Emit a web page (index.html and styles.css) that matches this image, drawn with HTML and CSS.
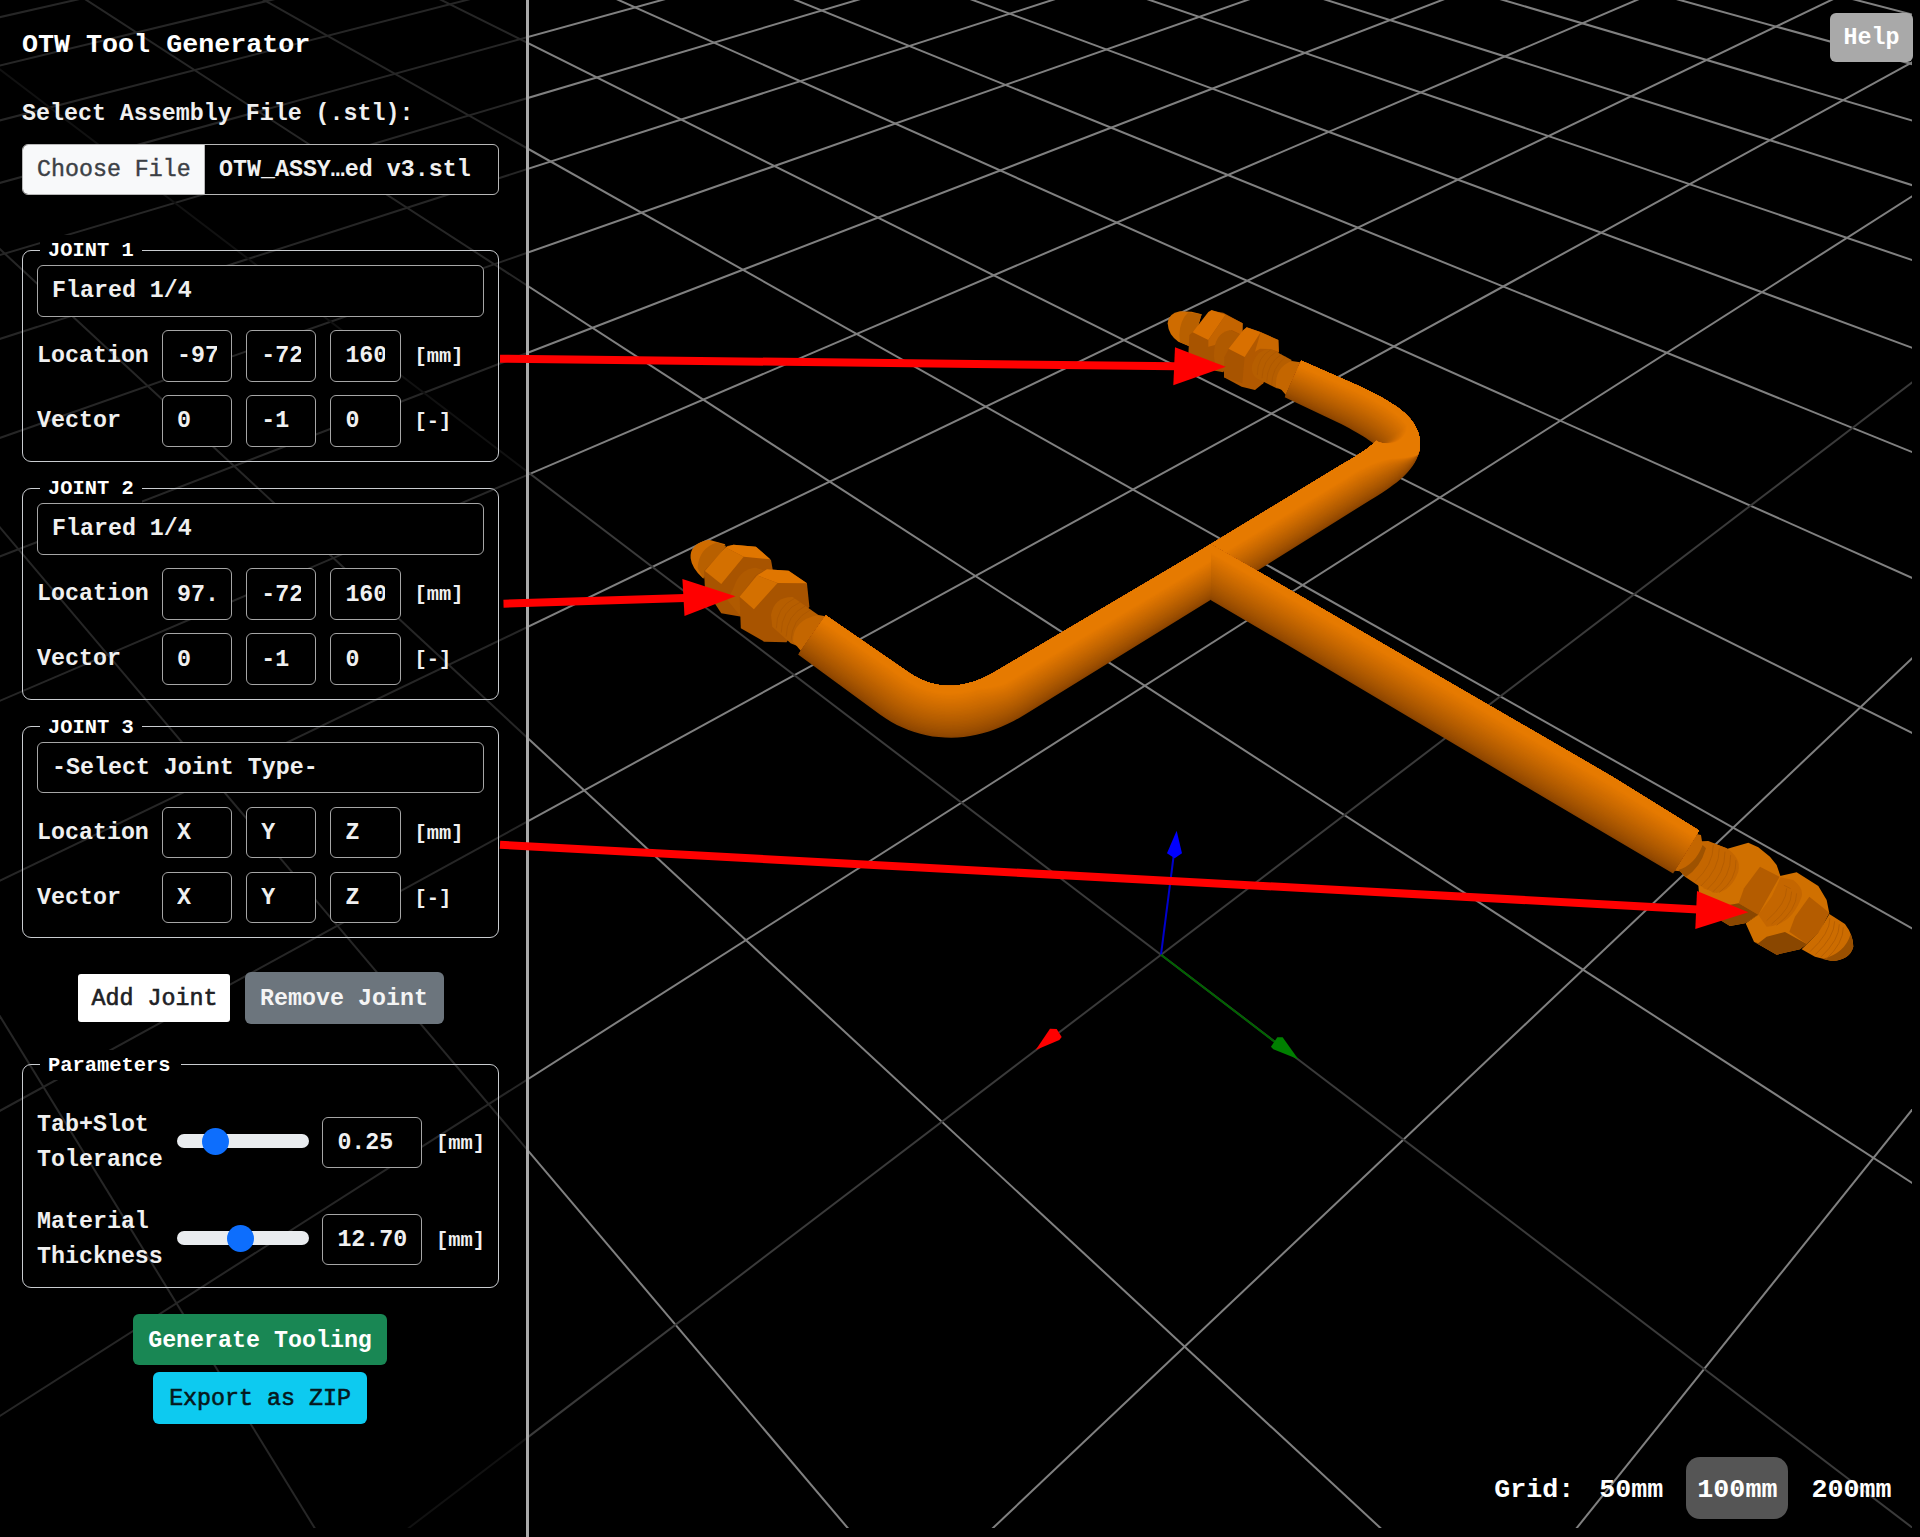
FILE: index.html
```html
<!DOCTYPE html>
<html lang="en">
<head>
<meta charset="utf-8">
<title>OTW Tool Generator</title>
<link rel="stylesheet" href="styles.css">
</head>
<body>
<svg class="scene" viewBox="0 0 1912 1528" aria-hidden="true">
  <defs>
    <clipPath id="branch-clip"><rect x="1211" y="500" width="700" height="500"/></clipPath>
  </defs>
  <g id="grid" class="grid"></g>
  <g class="axes">
    <path d="M1161 954.7 1173.5 857" stroke="#0000cc"/>
    <path d="M1161 954.7 1275 1042" stroke="#006400"/>
    <g transform="translate(1000 800) scale(.3333)" stroke="none">
      <path d="M530 92 546 160 524 175 501 160Z" fill="#00f"/>
      <path d="M895 778 848 712 832 712 813 740 820 748Z" fill="#008000"/>
      <path d="M107 750 150 686 170 687 185 711 178 720Z" fill="#f00"/>
    </g>
  </g>

  <!-- fitting, joint 1 -->
  <g transform="translate(1100 280) scale(.3333)">
    <path fill="#cf6c00" d="M203 130Q205 100 240 94L275 95 305 103 275 202 235 185Q205 165 203 130Z"/>
    <path fill="#b86000" d="M238 165Q240 120 265 97L305 103 275 202 240 186Z"/>
    <path fill="#a85400" d="M335 92 370 98 428 130 428 165 370 277 345 272 265 225 268 165 280 155Z"/>
    <path fill="#d97000" d="M325 96 335 90 377 104 325 180 278 157Z"/>
    <path fill="#c46400" d="M377 104 428 130 426 165 395 150 345 195 325 200 325 180Z"/>
    <path fill="#b05a00" d="M342 230Q340 160 390 150L425 165 385 262 345 250Z"/>
    <path fill="#b25900" d="M440 142 480 155 535 180 537 215 490 310 465 330 425 320 372 292 373 232 385 205Z"/>
    <path fill="#a85400" d="M373 232 386 207 434 230 427 310 372 292Z"/>
    <path fill="#d97000" d="M430 150 440 142 482 157 434 231 386 206Z"/>
    <path fill="#c96800" d="M482 157 535 180 536 215 510 207 480 206 465 215Z"/>
    <path fill="#b65e00" d="M455 260Q470 205 515 208L575 240 545 327 530 325 470 295Q455 285 455 260Z"/>
    <g fill="none" stroke="#aa5600" stroke-width="2">
      <path d="M472 285Q472 230 512 210M486 295Q488 240 528 216M500 305Q502 250 544 223M515 315Q516 262 557 231"/>
    </g>
    <path fill="#c46600" d="M528 320Q525 262 575 243L610 248 562 350 545 330Z"/>
  </g>

  <!-- fitting, joint 2 -->
  <g transform="translate(660 500) scale(.4082 .3333)">
    <path fill="#cf6c00" d="M75 175Q72 130 120 119L160 133 110 217 105 235Q78 205 75 175Z"/>
    <path fill="#b86000" d="M92 205Q95 145 140 127L162 138 112 222 108 238Z"/>
    <path fill="#a85400" d="M165 138 180 134 235 140 272 180 277 215 200 350 150 340 110 265 108 213Z"/>
    <path fill="#e07600" d="M160 142 180 134 235 140 270 178 205 170Z"/>
    <path fill="#d47000" d="M160 142 205 170 150 252 110 213Z"/>
    <path fill="#b05a00" d="M180 265Q195 205 235 203L262 215 195 345 165 300Z"/>
    <path fill="#a85400" d="M262 208 315 212 360 250 366 320 310 427 255 425 198 385 195 290 235 225Z"/>
    <path fill="#e07600" d="M238 226 262 208 315 212 360 250 288 249Z"/>
    <path fill="#d47000" d="M238 226 288 249 230 328 195 290Z"/>
    <path fill="#b65e00" d="M272 345Q280 290 325 291L388 345 335 437 320 430 275 380Z"/>
    <g fill="none" stroke="#aa5600" stroke-width="2">
      <path d="M285 385Q285 320 330 295M297 398Q297 330 343 307M309 410Q310 345 356 318M321 422Q323 357 368 330"/>
    </g>
    <path fill="#c46600" d="M326 425Q325 360 388 345L412 350 350 460Z"/>
  </g>

  <!-- fitting, joint 3 -->
  <g transform="translate(1600 780) scale(.3333)">
    <path fill="#c46600" d="M205 270 280 160 303 165 306 184 325 183 380 205 425 260 350 342 300 320 255 290 240 274Z"/>
    <path fill="#9e5200" d="M235 270Q285 255 308 195L318 205Q300 265 258 290Z"/>
    <path fill="#d07000" d="M380 207 445 188 475 202 510 230 530 255 542 290 475 405 435 430 390 438 345 410 297 340 295 315 345 338Z"/>
    <path fill="#c46600" d="M340 190 380 205Q425 235 415 275Q395 330 350 339L310 325Z"/>
    <path fill="#b45c00" d="M480 260 542 292 515 350 475 404 416 370 432 325Z"/>
    <path fill="#8a4700" d="M370 378 416 370 475 404 435 430 390 438 330 402Z"/>
    <path fill="#d07000" d="M540 288 590 277 655 318 680 360 688 400 620 492 600 508 530 524 462 485 437 430 475 404Z"/>
    <path fill="#c46600" d="M542 292 580 300Q612 325 605 350Q575 435 500 440L475 404 515 350Z"/>
    <path fill="#b45c00" d="M628 350 688 398 660 455 620 492 568 455 585 410Z"/>
    <path fill="#8a4700" d="M475 490 500 470 555 456 620 492 600 508 530 524 462 485Z"/>
    <path fill="#cc6c00" d="M688 402 735 432Q760 465 760 500Q750 540 695 543L645 530 605 508 655 458Z"/>
    <path fill="#9a5000" d="M752 462Q760 480 760 500Q750 540 695 543L668 537Q735 520 752 462Z"/>
    <g fill="none" stroke="#b25b00" stroke-width="2.5">
      <path d="M340 195Q340 255 285 305M358 205Q358 268 303 318M375 215Q376 280 322 328M392 225Q394 290 338 336M408 240Q410 300 358 337"/>
      <path d="M560 325Q560 370 500 422M575 335Q575 385 515 432M590 340Q590 390 530 436M552 316 572 326"/>
      <path d="M690 415Q690 460 630 515M704 424Q704 470 646 524M718 433Q718 480 662 532M730 442Q730 490 678 538"/>
    </g>
  </g>

  <g id="main-pipe"></g>
  <g id="branch-pipe" clip-path="url(#branch-clip)"></g>
</svg>

<aside class="sidebar">
  <h1 class="title">OTW Tool Generator</h1>
  <label class="file-label">Select Assembly File (.stl):</label>
  <div class="file">
    <span class="file-button">Choose File</span>
    <span class="file-name">OTW_ASSY…ed v3.stl</span>
  </div>

  <fieldset class="group">
    <legend>JOINT 1</legend>
    <div class="field select">Flared 1/4</div>
    <div class="row">
      <span>Location</span>
      <input class="field" value="-97"><input class="field" value="-72"><input class="field" value="160">
      <span class="unit">[mm]</span>
    </div>
    <div class="row">
      <span>Vector</span>
      <input class="field" value="0"><input class="field" value="-1"><input class="field" value="0">
      <span class="unit">[-]</span>
    </div>
  </fieldset>

  <fieldset class="group">
    <legend>JOINT 2</legend>
    <div class="field select">Flared 1/4</div>
    <div class="row">
      <span>Location</span>
      <input class="field" value="97."><input class="field" value="-72"><input class="field" value="160">
      <span class="unit">[mm]</span>
    </div>
    <div class="row">
      <span>Vector</span>
      <input class="field" value="0"><input class="field" value="-1"><input class="field" value="0">
      <span class="unit">[-]</span>
    </div>
  </fieldset>

  <fieldset class="group">
    <legend>JOINT 3</legend>
    <div class="field select">-Select Joint Type-</div>
    <div class="row">
      <span>Location</span>
      <input class="field" value="X"><input class="field" value="Y"><input class="field" value="Z">
      <span class="unit">[mm]</span>
    </div>
    <div class="row">
      <span>Vector</span>
      <input class="field" value="X"><input class="field" value="Y"><input class="field" value="Z">
      <span class="unit">[-]</span>
    </div>
  </fieldset>

  <div class="joint-actions">
    <button class="btn btn-add">Add Joint</button>
    <button class="btn btn-remove">Remove Joint</button>
  </div>

  <fieldset class="group params">
    <legend>Parameters</legend>
    <div class="param">
      <span>Tab+Slot Tolerance</span>
      <div class="slider"><i class="thumb" style="left:25px"></i></div>
      <input class="field" value="0.25">
      <span class="unit">[mm]</span>
    </div>
    <div class="param">
      <span>Material Thickness</span>
      <div class="slider"><i class="thumb" style="left:50px"></i></div>
      <input class="field" value="12.70">
      <span class="unit">[mm]</span>
    </div>
  </fieldset>

  <div class="output-actions">
    <button class="btn btn-generate">Generate Tooling</button>
    <button class="btn btn-export">Export as ZIP</button>
  </div>
</aside>

<button class="help">Help</button>

<nav class="grid-size">
  <span class="grid-title">Grid:</span>
  <span class="size">50mm</span>
  <span class="size active">100mm</span>
  <span class="size">200mm</span>
</nav>

<svg class="callouts" viewBox="0 0 1920 1537" aria-hidden="true">
  <g stroke="#f00" stroke-width="8">
    <path d="M500 358.7 1176 366.2"/>
    <path d="M503.5 603.7 685 598.1"/>
    <path d="M500 844.8 1698 909.4"/>
  </g>
  <g fill="#f00">
    <path d="M1175 347.3 1225.7 366.7 1173.3 385.3Z"/>
    <path d="M682.4 579 735.5 596.3 684.5 616Z"/>
    <path d="M1697 891 1748.3 912.3 1695.3 929Z"/>
  </g>
</svg>
<script src="scene.js"></script>
</body>
</html>
```
FILE: styles.css
```css
* { box-sizing: border-box; }

body {
  margin: 0;
  height: 1537px;
  position: relative;
  overflow: hidden;
  background: #000;
  color: #f0f0f0;
  font: bold 23.3px/35px "Liberation Mono", monospace;
}

.scene {
  position: absolute;
  left: 0;
  top: 0;
  width: 1912px;
  height: 1528px;
  overflow: hidden;
}
.grid { stroke: #808080; stroke-width: 2; }
.grid .axis { stroke: #3a3a3a; }
.axes { stroke-width: 2; }

.callouts {
  position: absolute;
  left: 0;
  top: 0;
  width: 1920px;
  height: 1537px;
  pointer-events: none;
}

.sidebar {
  position: relative;
  width: 529px;
  height: 1537px;
  padding: 25px 27px 0 22px;
  border-right: 3px solid #a9a9a9;
  background: rgba(0, 0, 0, .7);
}

.title {
  margin: 0 0 31.5px;
  font-size: 26.7px;
  line-height: 40px;
  color: #fff;
}
.file-label { display: block; margin-bottom: 12.5px; }

.file {
  display: flex;
  height: 51px;
  margin-bottom: 40px;
  border: 1px solid #b8b8b8;
  border-radius: 6px;
  overflow: hidden;
  background: #000;
  line-height: 51px;
}
.file-button {
  width: 182px;
  padding-left: 14px;
  border-right: 1px solid #b8b8b8;
  background: #f8f9fa;
  color: #3c4045;
  font-weight: normal;
  -webkit-text-stroke: .4px;
}
.file-name { padding-left: 14px; white-space: pre; }

.group {
  min-width: 0;
  margin: 0 0 11.9px;
  padding: 0 14px 14px;
  border: 1px solid #c9ccd0;
  border-radius: 9px;
}
.group legend {
  height: 30px;
  margin-left: 3px;
  padding: 0 8px;
  background: #000;
  color: #fff;
  font-size: 20.4px;
  line-height: 32px;
}

.field {
  display: block;
  width: 100%;
  min-width: 0;
  height: 51.5px;
  margin: 0;
  padding: 1px 14.5px 0 14px;
  border: 1px solid #a6a6a6;
  border-radius: 6px;
  background: #000;
  color: inherit;
  font: inherit;
  outline: 0;
}
.select { padding-top: 0; line-height: 50px; }

.row {
  display: grid;
  grid-template-columns: 111px repeat(3, 70.2px) 60px;
  column-gap: 14px;
  align-items: center;
  margin-top: 13.5px;
}
.row > span { padding-top: 1px; }
.unit { font-size: 20.4px; white-space: nowrap; }

.joint-actions {
  display: flex;
  justify-content: center;
  align-items: center;
  gap: 15px;
  height: 52px;
  margin: 33.5px 0 26px;
}
.btn {
  height: 51.5px;
  margin: 0;
  padding: 3px 0 0;
  border: 0;
  border-radius: 6px;
  color: #fff;
  font: inherit;
}
.btn-add {
  width: 152px;
  height: 48px;
  padding-left: 2px;
  border-radius: 3px;
  background: #fff;
  color: #202124;
  font-weight: normal;
  -webkit-text-stroke: .6px;
}
.btn-remove { width: 199px; background: #6c757d; color: #f4f4f4; }

.params { margin-bottom: 26px; padding: 0 14px 13px; }
.params legend { padding-right: 11px; }
.param {
  display: grid;
  grid-template-columns: 126px 132px 100px 60px;
  column-gap: 13.7px;
  align-items: center;
  height: 70px;
  margin-top: 27px;
}
.param > span { padding-top: 1px; }
.param .unit { padding-top: 2px; }
.slider {
  position: relative;
  height: 14px;
  margin-top: -2px;
  border-radius: 7px;
  background: #e9ecef;
}
.thumb {
  position: absolute;
  top: -6.5px;
  width: 27px;
  height: 27px;
  border-radius: 50%;
  background: #0d6efd;
}

.output-actions {
  display: flex;
  flex-direction: column;
  align-items: center;
  gap: 7px;
  margin-right: 1px;
}
.btn-generate { width: 254px; background: #198754; }
.btn-export {
  width: 214px;
  background: #0dcaf0;
  color: #06181c;
  font-weight: normal;
  -webkit-text-stroke: .6px;
}

.help {
  position: absolute;
  left: 1830px;
  top: 13px;
  width: 83px;
  height: 49px;
  padding: 1px 0 0;
  border: 0;
  border-radius: 6px;
  background: #a9a9a9;
  color: #fff;
  font: inherit;
}

.grid-size {
  position: absolute;
  right: 17.5px;
  bottom: 13px;
  display: flex;
  font-size: 26.7px;
  line-height: 67px;
  color: #fff;
}
.grid-title { padding-right: 14px; }
.size { height: 62px; padding: 0 11px; border-radius: 14px; }
.active { background: #555; margin: 0 12px; }
```
FILE: scene.js
```js
const NS = 'http://www.w3.org/2000/svg';

function add(parent, name, attrs) {
  const el = document.createElementNS(NS, name);
  for (const key in attrs) el.setAttribute(key, attrs[key]);
  parent.appendChild(el);
}

// Perspective projection of the ground plane, one unit = 100mm.
const depth = (i, j) => 1 - 0.08875 * i - 0.097 * j;
function project(i, j) {
  const w = depth(i, j);
  return [(1161 - 302.7 * i + 106.3 * j) / w, (954.8 + 67.4 * i + 74.3 * j) / w];
}

function gridLine(a, b, cls) {
  const [x1, y1] = project(...a);
  const [x2, y2] = project(...b);
  add(document.getElementById('grid'), 'line', { x1, y1, x2, y2, class: cls || 'line' });
}

for (let n = -30; n <= 8; n++) {
  if (n === 0) continue;
  gridLine([n, -50], [n, (0.95 - 0.08875 * n) / 0.097]);
  gridLine([-50, n], [(0.95 - 0.097 * n) / 0.08875, n]);
}
gridLine([0, -50], [0, 9.5], 'axis');
gridLine([-50, 0], [10.2, 0], 'axis');

function bezier(p0, p1, p2, p3, steps) {
  const out = [];
  for (let k = 0; k <= steps; k++) {
    const t = k / steps, u = 1 - t;
    out.push([0, 1, 2].map(c =>
      u * u * u * p0[c] + 3 * u * u * t * p1[c] + 3 * u * t * t * p2[c] + t * t * t * p3[c]));
  }
  return out;
}

// Outline of a pipe whose shaded side is trimmed by `trim` (0..1 of the diameter).
const LIGHT = [0.3, -0.95];
function ribbon(points, trim) {
  const left = [], right = [];
  points.forEach(([x, y, r], k) => {
    const a = points[Math.max(0, k - 1)];
    const b = points[Math.min(points.length - 1, k + 1)];
    const len = Math.hypot(b[0] - a[0], b[1] - a[1]);
    const nx = -(b[1] - a[1]) / len, ny = (b[0] - a[0]) / len;
    const dot = Math.max(-1, Math.min(1, 1.25 * (nx * LIGHT[0] + ny * LIGHT[1])));
    const l = r * (1 - 2 * trim * Math.max(0, -dot));
    const q = r * (1 - 2 * trim * Math.max(0, dot));
    left.push(`${(x + nx * l).toFixed(1)} ${(y + ny * l).toFixed(1)}`);
    right.unshift(`${(x - nx * q).toFixed(1)} ${(y - ny * q).toFixed(1)}`);
  });
  return 'M' + left.concat(right).join('L') + 'Z';
}

function pipe(id, points) {
  const dark = [138, 68, 0], light = [230, 122, 0], n = 32;
  for (let k = 0; k <= n; k++) {
    const t = k / n;
    const mix = Math.pow(t, 0.8);
    const color = dark.map((d, c) => Math.round(d + (light[c] - d) * mix));
    add(document.getElementById(id), 'path', {
      d: ribbon(points, 0.85 * t),
      fill: `rgb(${color})`
    });
  }
}

pipe('main-pipe', [
  [812, 635, 24],
  ...bezier([895, 694, 25.5], [930, 718, 26], [970, 718, 26], [1012, 692, 26], 24),
  [1209, 573, 23.8],
  ...bezier([1355, 483, 22.5], [1413, 449, 22.3], [1413, 436, 22], [1350, 405, 21], 40),
  [1293, 379, 20]
]);
pipe('branch-pipe', [[1195, 563, 24], [1300, 624, 24.5], [1600, 800, 26.3], [1686, 852, 25]]);
```
